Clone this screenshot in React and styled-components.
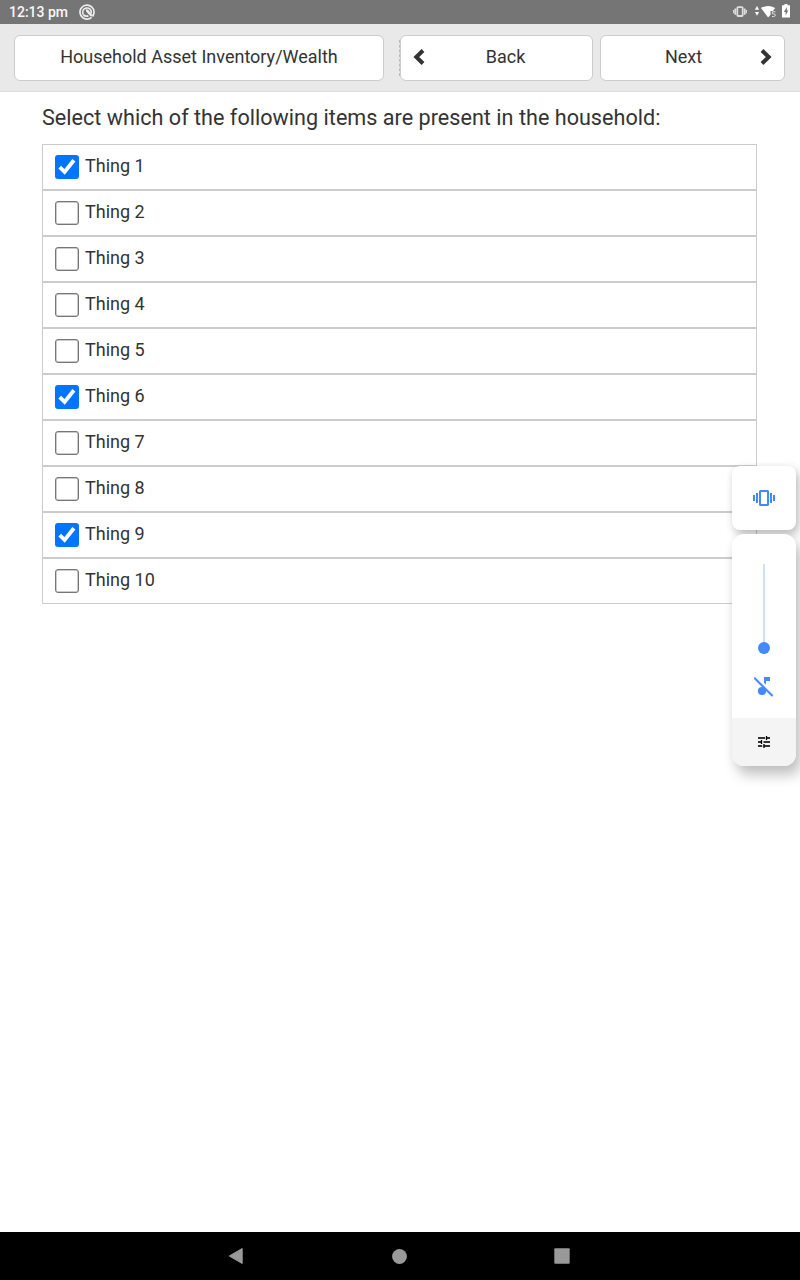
import React from "react";
import styled, { createGlobalStyle } from "styled-components";

const GlobalStyle = createGlobalStyle`
  * { box-sizing: border-box; }
  body { margin: 0; background: #fff; color: #333; font-family: Roboto, sans-serif; }
`;

const Screen = styled.div`
  position: relative;
  width: 800px;
  height: 1280px;
  display: flex;
  flex-direction: column;
  overflow: hidden;
`;

const StatusBar = styled.div`
  display: flex;
  align-items: center;
  justify-content: space-between;
  height: 24px;
  flex: none;
  padding: 0 10px 0 9px;
  background: #757575;
  color: #f8f8f8;
`;

const StatusGroup = styled.div`
  display: flex;
  align-items: center;
  gap: ${(p) => p.$gap}px;
  padding-bottom: ${(p) => p.$lift || 0}px;
  svg { display: block; }
`;

const Clock = styled.span`
  font-size: 14px;
  font-weight: 500;
  line-height: 24px;
`;

const Header = styled.header`
  display: flex;
  height: 68px;
  flex: none;
  padding: 11px 15px 0 14px;
  background: #e9e9e9;
  border-bottom: 1px solid #ddd;
`;

const HeaderButton = styled.button`
  display: flex;
  align-items: center;
  justify-content: center;
  width: ${(p) => p.$width}px;
  height: 46px;
  margin: 0 ${(p) => p.$after || 0}px 0 0;
  padding: 0 12px 2px;
  border: 1px solid #ccc;
  border-radius: 6px;
  background: #fff;
  color: #333;
  font: 400 18px Roboto, sans-serif;
  svg { display: block; flex: none; }
`;

const ButtonLabel = styled.span`
  flex: 1;
  text-align: center;
  padding: 0 ${(p) => p.$right || 0}px 2px ${(p) => p.$left || 0}px;
`;

const Divider = styled.span`
  height: 36px;
  margin-top: 5px;
  border-left: 1px dashed #bbb;
`;

const Content = styled.main`
  flex: 1;
  padding: 12px 43px 0 42px;
`;

const Question = styled.h1`
  margin: 0 0 12px;
  font-size: 21.6px;
  letter-spacing: 0.015px;
  font-weight: 400;
  line-height: 28px;
  white-space: nowrap;
`;

const Row = styled.div`
  display: flex;
  height: 46px;
  padding: 10px 12px 0;
  border: 1px solid #ccc;
`;

const Box = styled.span`
  display: block;
  width: 24px;
  height: 24px;
  margin-right: 6px;
  border: ${(p) => (p.$checked ? "0" : "1px solid #767676")};
  border-radius: 3px;
  background: ${(p) => (p.$checked ? "#0075ff" : "#fff")};
  box-shadow: ${(p) => (p.$checked ? "none" : "inset 0 0 0 0.5px #999")};
  svg { display: block; }
`;

const RowLabel = styled.span`
  font-size: 18px;
  line-height: 22px;
`;

const VolumeOverlay = styled.aside`
  position: absolute;
  left: 732px;
  top: 466px;
  width: 64px;
  display: flex;
  flex-direction: column;
  gap: 4px;
`;

const Card = styled.div`
  display: flex;
  flex-direction: column;
  align-items: center;
  justify-content: ${(p) => (p.$center ? "center" : "flex-start")};
  height: ${(p) => p.$height}px;
  border-radius: ${(p) => p.$radius}px;
  background: #fff;
  overflow: hidden;
  box-shadow: ${(p) => (p.$center ? "3px 5px 10px" : "5px 9px 13px")} rgba(0, 0, 0, 0.24),
    0 0 8px rgba(0, 0, 0, 0.05);
  svg { display: block; }
`;

const Track = styled.div`
  width: 2px;
  height: 78px;
  margin-top: 30px;
  background: #cfe0fc;
`;

const Knob = styled.div`
  width: 12px;
  height: 12px;
  border-radius: 50%;
  background: #448aff;
  margin-bottom: 23px;
`;

const SettingsFooter = styled.div`
  display: flex;
  align-items: center;
  justify-content: center;
  width: 100%;
  height: 48px;
  margin-top: auto;
  background: #f4f4f4;
`;

const NavBar = styled.nav`
  display: flex;
  align-items: center;
  height: 48px;
  flex: none;
  padding-left: 228px;
  gap: 147.5px;
  background: #000;
  svg { display: block; }
`;

const things = Array.from({ length: 10 }, (_, i) => ({
  label: `Thing ${i + 1}`,
  checked: [0, 5, 8].includes(i),
}));

const Check = () => (
  <svg width="24" height="24" viewBox="0 0 24 24">
    <path d="M4.7 12.2 9.6 16.9 18.9 5.3" fill="none" stroke="#fff" strokeWidth="3.9" />
  </svg>
);

const Chevron = ({ flip }) => (
  <svg width="12" height="18" viewBox="0 0 12 18">
    <path
      d="M10 2.5 3.3 9 10 15.5"
      fill="none"
      stroke="#333"
      strokeWidth="4"
      transform={flip ? "translate(12 0) scale(-1 1)" : undefined}
    />
  </svg>
);

const AppGlyph = () => (
  <svg width="16" height="16" viewBox="0 0 16 16" fill="none" stroke="#eee">
    <path d="M12.6 13.4A7 7 0 1 1 15 8.6Q14.8 10.8 13.6 12.4" strokeWidth="1.7" />
    <path d="M4.4 10.6A4.3 4.3 0 1 1 12.2 9" strokeWidth="1.5" />
    <path d="M7 6.6Q8.4 6.4 9.4 8.2L13 11.8" strokeWidth="2.5" />
    <path d="M4.4 10.8Q6 12.6 9.4 12" strokeWidth="1.8" />
  </svg>
);

const StatusVibrate = () => (
  <svg width="15" height="14" viewBox="0 -1.6 15 14" fill="none" stroke="#dedede">
    <rect x="4.3" y="1.6" width="5.4" height="8.8" rx=".8" strokeWidth="1.8" />
    <path d="M2.2 2.8V9.2M11.8 2.8V9.2" strokeWidth="1.6" />
    <path d="M.6 4.3V7.7M13.4 4.3V7.7" strokeWidth="1.2" />
  </svg>
);

const Wifi = () => (
  <svg width="22" height="14" viewBox="0 -0.7 22 14" fill="#fff">
    <path d="M3 1.2 5.1 5H.9ZM3 11 5.1 7.2H.9Z" />
    <path d="M7 3.3Q14 -.8 21.2 3.3L18.8 6.2H16.5V10L14.1 12.7Z" />
    <path d="M21.4 7H18.4V9.1H19.8Q21.3 9.1 21.3 10.4T19.7 11.8H18" fill="none" stroke="#ddd" strokeWidth="1" />
  </svg>
);

const Battery = () => (
  <svg width="8" height="14" viewBox="0 0 8 14">
    <path d="M2.5 0H5.5V1.2H8V13.5H0V1.2H2.5Z" fill="#fff" />
    <path d="M4.8 3.1 1.9 8H3.6V11.5L6.3 6.6H4.8Z" fill="#757575" />
  </svg>
);

const VolumeVibrate = () => (
  <svg width="22" height="16" viewBox="0 0 22 16" fill="none" stroke="#448aff" strokeWidth="2">
    <rect x="7" y="1" width="8" height="14" rx=".5" />
    <path d="M4 3V13M18 3V13M1 5V11M21 5V11" />
  </svg>
);

const MusicOff = () => (
  <svg width="20" height="20" viewBox="0 0 20 20" fill="#448aff">
    <circle cx="8" cy="14" r="4.1" />
    <path d="M10 0H16V4H12V7.8L10 5.8ZM8 9.9 12 12V14H8Z" />
    <path d="M.2 .8 18.6 19" stroke="#448aff" strokeWidth="2" />
  </svg>
);

const Tune = () => (
  <svg width="12" height="12" viewBox="0 0 12 12" stroke="#333" fill="none">
    <path d="M0 2H7M8.5 2H12M0 6H4M5.5 6H12M0 10H4.2M5.5 10H12" strokeWidth="2" />
    <path d="M8.5 0V4M3.5 4V8M6 8V12" stroke="#000" strokeWidth="1.3" />
  </svg>
);

export default function App() {
  return (
    <Screen>
      <GlobalStyle />
      <StatusBar>
        <StatusGroup $gap={11}>
          <Clock>12:13 pm</Clock>
          <AppGlyph />
        </StatusGroup>
        <StatusGroup $gap={6} $lift={2}>
          <StatusVibrate />
          <Wifi />
          <Battery />
        </StatusGroup>
      </StatusBar>
      <Header>
        <HeaderButton $width={370} $after={15}>
          <ButtonLabel>Household Asset Inventory/Wealth</ButtonLabel>
        </HeaderButton>
        <Divider />
        <HeaderButton $width={193} $after={7}>
          <Chevron />
          <ButtonLabel $left={6}>Back</ButtonLabel>
        </HeaderButton>
        <HeaderButton $width={185}>
          <ButtonLabel $right={6}>Next</ButtonLabel>
          <Chevron flip />
        </HeaderButton>
      </Header>
      <Content>
        <Question>Select which of the following items are present in the household:</Question>
        {things.map(({ label, checked }) => (
          <Row key={label}>
            <Box $checked={checked} role="checkbox" aria-checked={checked} aria-label={label}>
              {checked && <Check />}
            </Box>
            <RowLabel>{label}</RowLabel>
          </Row>
        ))}
      </Content>
      <VolumeOverlay>
        <Card $height={64} $radius={8} $center>
          <VolumeVibrate />
        </Card>
        <Card $height={232} $radius={12}>
          <Track />
          <Knob />
          <MusicOff />
          <SettingsFooter>
            <Tune />
          </SettingsFooter>
        </Card>
      </VolumeOverlay>
      <NavBar>
        <svg width="16" height="16" viewBox="0 0 16 16">
          <path d="M14.2.5V15.5L1.3 8Z" fill="#999" stroke="#999" strokeLinejoin="round" />
        </svg>
        <svg width="15" height="15" viewBox="0 0 15 15">
          <circle cx="7.5" cy="7.5" r="7.4" fill="#999" />
        </svg>
        <svg width="16" height="16" viewBox="0 0 16 16">
          <rect x=".3" y=".3" width="15.4" height="15.4" rx="1" fill="#999" />
        </svg>
      </NavBar>
    </Screen>
  );
}
